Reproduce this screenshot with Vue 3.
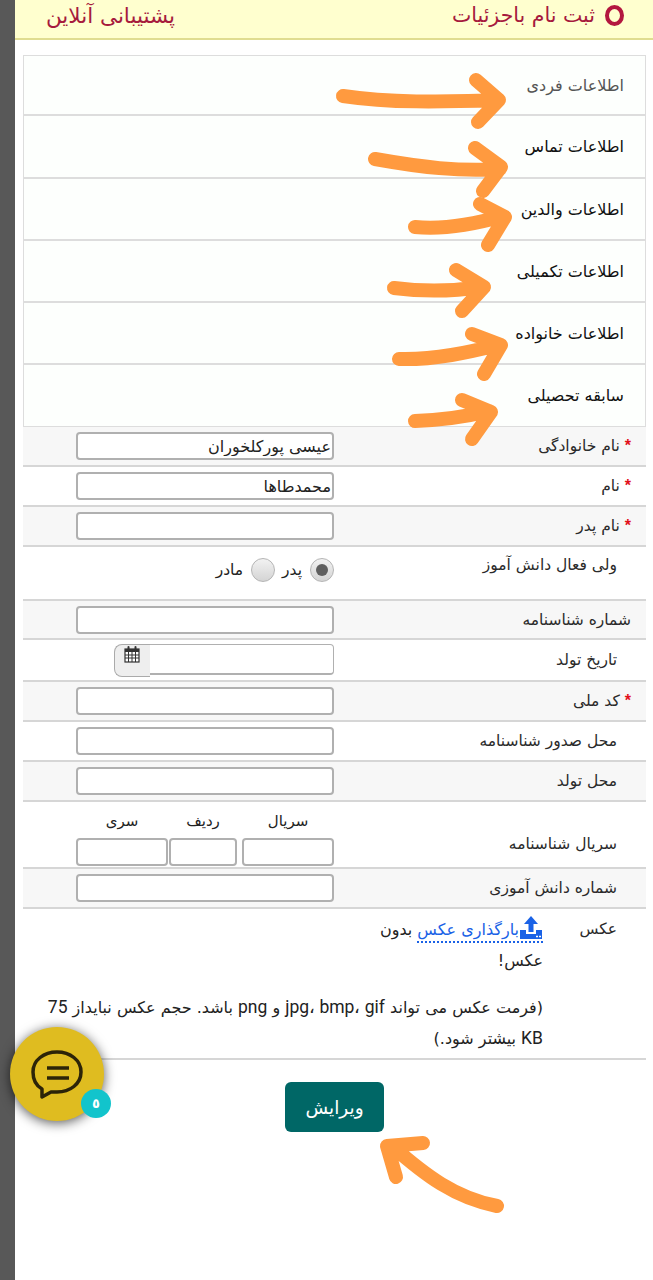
<template>
  <div class="page">
    <div class="side-bar"></div>
    <div class="main" dir="rtl">
      <header class="top">
        <div class="top-title">
          <span class="ring"></span>
          <span>ثبت نام باجزئیات</span>
        </div>
        <span class="top-link">پشتیبانی آنلاین</span>
      </header>

      <div class="sections">
        <div
          v-for="(s, i) in sections"
          :key="s.title"
          :class="['section', { first: i === 0 }]"
          :style="{ height: s.h + 'px' }"
        >{{ s.title }}</div>
      </div>

      <form class="form" @submit.prevent>
        <div
          v-for="row in rows"
          :key="row.label"
          :class="['row', row.kind && `row-${row.kind}`, { shaded: row.shaded, flush: row.flush }]"
          :style="{ height: row.h + 'px' }"
        >
          <label class="label">
            <span v-if="row.req" class="star">*</span>
            {{ row.label }}
          </label>
          <div class="field">
            <input v-if="!row.kind" class="input" type="text" :value="row.value" />

            <div v-else-if="row.kind === 'radio'" class="radios">
              <span class="radio on"></span><span class="radio-text">پدر</span>
              <span class="radio"></span><span class="radio-text">مادر</span>
            </div>

            <div v-else-if="row.kind === 'date'" class="date">
              <input class="input date-input" type="text" />
              <span class="cal-btn">
                <svg width="16" height="17" viewBox="0 0 16 17">
                  <rect x="1" y="3" width="14" height="13" fill="#fff" stroke="#333" stroke-width="1.2" />
                  <rect x="1" y="3" width="14" height="3" fill="#333" />
                  <path d="M1 9h14M1 12h14M4.500 6v10M8 6v10M11.500 6v10" stroke="#333" stroke-width="1" />
                  <path d="M4.500 1v3M11.500 1v3" stroke="#333" stroke-width="2" stroke-linecap="round" />
                </svg>
              </span>
            </div>

            <div v-else class="serial">
              <div
                v-for="p in serialParts"
                :key="p.name"
                class="serial-part"
                :style="{ width: p.w + 'px', marginLeft: p.gap + 'px' }"
              >
                <span class="serial-name">{{ p.name }}</span>
                <input class="input" type="text" />
              </div>
            </div>
          </div>
        </div>

        <div class="row photo flush">
          <label class="label">عکس</label>
          <div class="photo-body">
            <p class="upload-line">
              <a class="upload" href="#" @click.prevent>
                <svg width="24" height="24" viewBox="0 0 24 24">
                  <path d="M12 1 5 9h4.500v8h5V9H19z" fill="#1a62e6" />
                  <path d="M1 15h6v4h10v-4h6v9H1z" fill="#1a62e6" />
                  <path d="M17 21.500h2M20 21.500h2" stroke="#fff" stroke-width="1.500" />
                </svg>بارگذاری عکس</a>
              بدون<br />عکس!
            </p>
            <p class="note">(فرمت عکس می تواند <span class="latin" dir="ltr">jpg، bmp، gif</span> و <span class="latin">png</span> باشد. حجم عکس نبایداز <span class="latin">75</span><br /><span class="latin">KB</span> بیشتر شود.)</p>
          </div>
        </div>

        <div class="actions">
          <button class="submit" type="submit">ویرایش</button>
        </div>
      </form>
    </div>

    <svg class="arrows" width="653" height="1280" viewBox="0 0 653 1280">
      <g fill="none" stroke="#ff9a3f" stroke-width="14" stroke-linecap="round" stroke-linejoin="round">
        <path d="M343 96C390 103 440 102 498 100M476 80 499 100 478 122" />
        <path d="M375 159C420 167 460 172 500 169M475 148 501 167 483 191" />
        <path d="M415 227C445 230 475 224 503 216M480 204 505 217 488 245" />
        <path d="M394 288C425 292 455 291 482 287M456 270 484 287 462 311" />
        <path d="M399 359C435 360 470 352 498 345M472 334 501 345 484 374" />
        <path d="M415 421C440 420 465 417 489 411M462 400 491 412 472 439" />
        <path d="M497 1206C455 1198 425 1175 392 1146M423 1143 387 1146 396 1177" />
      </g>
    </svg>

    <div class="chat">
      <svg width="94" height="94" viewBox="0 0 94 94">
        <path
          d="M32 70 32 62C25 58 23 51 23 45 23 33 34 25 47 25 60 25 71 33 71 45 71 57 60 65 47 65 45 65 43 65 41 65Z"
          fill="none" stroke="#2c2408" stroke-width="3.500" stroke-linejoin="round"
        />
        <path d="M37 41H59M37 51H59" stroke="#2c2408" stroke-width="3.500" />
      </svg>
      <span class="badge">٥</span>
    </div>
  </div>
</template>

<script setup>
const sections = [
  { title: 'اطلاعات فردی', h: 60 },
  { title: 'اطلاعات تماس', h: 63 },
  { title: 'اطلاعات والدین', h: 62 },
  { title: 'اطلاعات تکمیلی', h: 62 },
  { title: 'اطلاعات خانواده', h: 62 },
  { title: 'سابقه تحصیلی', h: 61 }
]

const rows = [
  { label: 'نام خانوادگی', req: true, value: 'عیسی پورکلخوران', h: 40, shaded: true },
  { label: 'نام', req: true, value: 'محمدطاها', h: 40 },
  { label: 'نام پدر', req: true, value: '', h: 40, shaded: true },
  { label: 'ولی فعال دانش آموز', kind: 'radio', h: 54, flush: true },
  { label: 'شماره شناسنامه', value: '', h: 39, shaded: true },
  { label: 'تاریخ تولد', kind: 'date', h: 42, flush: true },
  { label: 'کد ملی', req: true, value: '', h: 40, shaded: true },
  { label: 'محل صدور شناسنامه', value: '', h: 40, flush: true },
  { label: 'محل تولد', value: '', h: 40, shaded: true, flush: true },
  { label: 'سریال شناسنامه', kind: 'serial', h: 67, flush: true },
  { label: 'شماره دانش آموزی', value: '', h: 40, shaded: true, flush: true }
]

const serialParts = [
  { name: 'سریال', w: 92, gap: 5 },
  { name: 'ردیف', w: 68, gap: 1 },
  { name: 'سری', w: 92, gap: 0 }
]
</script>

<style>
html, body { margin: 0; background: #fff; }
</style>

<style scoped>
.page {
  position: relative; display: flex;
  width: 653px; height: 1280px; overflow: hidden;
  font-family: "DejaVu Sans", sans-serif; color: #222; background: #fff;
}
.side-bar { width: 15px; flex-shrink: 0; background: #585858; }
.main { flex: 1; min-width: 0; }

.top {
  display: flex; align-items: center; justify-content: space-between;
  box-sizing: border-box; height: 40px; padding: 0 29px 8px 31px;
  background: #ffffcf; border-bottom: 2px solid #e0dd90;
  color: #a61a3d; font-size: 20.500px; white-space: nowrap;
}
.top-link { font-size: 21.500px; }
.top-title { display: flex; align-items: center; gap: 10px; }
.ring {
  box-sizing: border-box; width: 19px; height: 21px;
  border: 4px solid #b3173f; border-radius: 50%;
}

.sections {
  margin: 15px 7px 0 8px;
  border: 1px solid #ddd; background: #fdfffd;
}
.section {
  box-sizing: border-box; display: flex; align-items: center;
  padding: 0 21px 0 0; border-bottom: 2px solid #ddd;
  font-size: 16px; color: #111;
}
.section:last-child { border-bottom: 0; }
.section.first { color: #555; }

.form { margin: 0 7px 0 8px; }
.row {
  box-sizing: border-box; display: flex; align-items: center;
  border-bottom: 2px solid #d6d6d6;
}
.row.shaded { background: #f7f7f7; }
.label {
  box-sizing: border-box; width: 312px; flex-shrink: 0;
  padding-right: 15px; font-size: 15.500px; color: #2a2a2a; white-space: nowrap;
}
.row.flush .label { padding-right: 29px; }
.star { color: #e2101a; font-family: "Liberation Sans", sans-serif; font-size: 16px; font-weight: 700; }
.field { width: 258px; }

.input {
  box-sizing: border-box; display: block; width: 100%; height: 28px;
  padding: 0 1px; direction: rtl;
  border: 2px solid #b0b0b0; border-radius: 4px; background: #fff;
  font-family: "DejaVu Sans", sans-serif; font-size: 16px; color: #222; outline: none;
}

.row-radio { align-items: flex-start; padding-top: 7px; }
.row-radio .label { padding-top: 2px; }
.radios { display: flex; align-items: center; font-size: 15.500px; padding-top: 4px; }
.radio {
  box-sizing: border-box; position: relative; width: 24px; height: 24px;
  border: 1px solid #b5b5b5; border-radius: 50%;
  background: linear-gradient(#f2f2f2, #d4d4d4);
}
.radio.on::after {
  content: ""; position: absolute; inset: 5px;
  border-radius: 50%; background: #5f5f5f;
}
.radio-text { margin: 0 8px 0 7px; }

.date { display: flex; align-items: flex-start; }
.date-input { width: 185px; height: 31px; border-width: 1px 1px 2px 1px; border-radius: 0 4px 4px 0; }
.cal-btn {
  box-sizing: border-box; display: flex; justify-content: center;
  width: 36px; height: 33px; margin-right: -1px;
  background: #eee; border: 1px solid #aaa; border-right: 0; border-radius: 8px 0 0 8px;
}
.cal-btn svg { margin-top: 1px; margin-right: 2px; }

.row-serial .label { padding-top: 18px; }
.serial { display: flex; margin-top: 8px; }
.serial-part { display: flex; flex-direction: column; align-items: center; gap: 8px; }
.serial-name { font-size: 15px; line-height: 18px; }

.photo { align-items: flex-start; height: 151px; padding-top: 5px; }
.photo .label { width: 103px; padding-top: 6px; }
.photo-body { width: 503px; font-size: 16px; }
.photo-body p { margin: 0; }
.upload-line { line-height: 31px; }
.upload { color: #1a62e6; text-decoration: none; border-bottom: 2px dotted #1a62e6; padding-bottom: 2px; }
.upload svg { vertical-align: -4px; }
.note {
  margin-top: 16px !important; line-height: 31px; color: #222;
  white-space: nowrap;
}
.latin { font-family: Roboto, sans-serif; font-size: 17.500px; }

.actions { display: flex; justify-content: center; margin-top: 22px; }
.submit {
  width: 99px; height: 50px; border: 0; border-radius: 6px;
  background: #006766; color: #fff;
  font-family: "DejaVu Sans", sans-serif; font-size: 18.500px;
}

.arrows { position: absolute; top: 0; left: 0; pointer-events: none; }

.chat {
  position: absolute; left: 10px; top: 1027px; width: 94px; height: 94px;
  border-radius: 50%; background: #dfbc20;
  box-shadow: 0 2px 12px rgba(0, 0, 0, 0.65);
}
.chat svg { display: block; }
.badge {
  position: absolute; left: 71px; top: 62px; width: 30px; height: 29px;
  display: flex; align-items: center; justify-content: center;
  border-radius: 50%; background: #12c4cc; color: #fff;
  font-size: 13px; font-weight: 700;
}
</style>
